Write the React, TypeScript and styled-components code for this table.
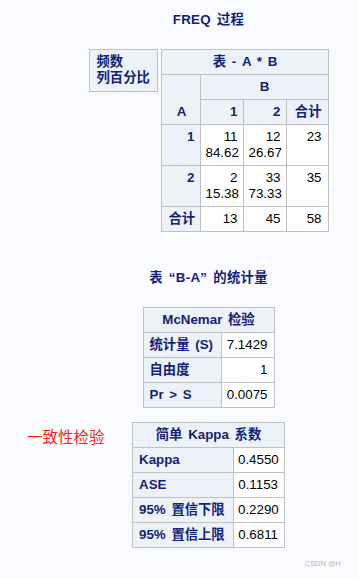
import React from 'react';
import styled, { createGlobalStyle } from 'styled-components';

const GlobalStyle = createGlobalStyle`
  html, body {
    margin: 0;
    padding: 0;
    background: #fafbfe;
  }
  body {
    font-family: 'Liberation Sans', 'Noto Sans CJK SC', sans-serif;
    overflow: hidden;
  }
`;

const Page = styled.div`
  width: 357px;
  height: 578px;
  display: flex;
  flex-direction: column;
  background: #fafbfe;
`;

// SAS output is centred on x = 208.5
const Centered = styled.div`
  width: 297px;
  margin-left: 60px;
  display: flex;
  flex-direction: column;
  align-items: center;
`;

const Title = styled.div<{ $top: number }>`
  margin-top: ${(p) => p.$top}px;
  font-size: 13.33px;
  line-height: 16px;
  font-weight: bold;
  color: #112277;
  letter-spacing: 0.3px;
  word-spacing: 2px;
  white-space: nowrap;
`;

// full-width CJK quotation marks, hugging the quoted text
const Quote = styled.span<{ $open?: boolean }>`
  display: inline-block;
  width: 13px;
  text-align: ${(p) => (p.$open ? 'right' : 'left')};
`;

const CrossRow = styled.div`
  margin-top: 21px;
  display: flex;
  align-items: flex-start;
  gap: 3px;
`;

const LegendBox = styled.div`
  box-sizing: border-box;
  width: 69px;
  margin-left: 1px;
  padding: 4px 6px 5px;
  border: 1px solid #c1c1c1;
  background: #edf2f9;
  color: #112277;
  font-size: 13.33px;
  line-height: 16px;
  font-weight: bold;
  white-space: nowrap;
`;

const Table = styled.table<{ $width: number; $top?: number }>`
  border-collapse: collapse;
  table-layout: fixed;
  width: ${(p) => p.$width}px;
  margin-top: ${(p) => p.$top ?? 0}px;
  font-size: 13.33px;
  line-height: 16px;
  flex-shrink: 0;
`;

const Head = styled.th<{ $align?: string; $valign?: string }>`
  padding: 4px 6px;
  border: 1px solid #c1c1c1;
  background: #edf2f9;
  color: #112277;
  font-weight: bold;
  word-spacing: 2px;
  text-align: ${(p) => p.$align ?? 'left'};
  vertical-align: ${(p) => p.$valign ?? 'top'};
  white-space: nowrap;
`;

const Cell = styled.td`
  padding: 4px 6px 4px 4px;
  border: 1px solid #c1c1c1;
  background: #ffffff;
  color: #000000;
  text-align: right;
  vertical-align: top;
  white-space: nowrap;
`;

const KappaRow = styled.div`
  margin-top: 14px;
  padding-left: 27px;
  display: flex;
  align-items: flex-start;
`;

const Note = styled.div`
  width: 105px;
  margin-top: 4px;
  font-family: 'Noto Sans CJK SC', sans-serif;
  font-size: 15.5px;
  line-height: 20px;
  color: #ff2020;
  white-space: nowrap;
`;

const Footer = styled.div`
  margin-top: auto;
  padding: 0 16px 10px 0;
  display: flex;
  justify-content: flex-end;
  font-size: 7.5px;
  color: #b8b8b8;
`;

const crossRows = [
  { label: '1', cells: [['11', '84.62'], ['12', '26.67'], ['23']] },
  { label: '2', cells: [['2', '15.38'], ['33', '73.33'], ['35']] },
  { label: '合计', cells: [['13'], ['45'], ['58']] },
];

const mcnemar = [
  ['统计量 (S)', '7.1429'],
  ['自由度', '1'],
  ['Pr > S', '0.0075'],
];

const kappa = [
  ['Kappa', '0.4550'],
  ['ASE', '0.1153'],
  ['95% 置信下限', '0.2290'],
  ['95% 置信上限', '0.6811'],
];

const StatTable: React.FC<{ title: string; rows: string[][]; widths: number[]; top?: number }> = ({
  title,
  rows,
  widths,
  top,
}) => (
  <Table $width={widths[0] + widths[1]} $top={top}>
    <colgroup>
      <col style={{ width: widths[0] }} />
      <col style={{ width: widths[1] }} />
    </colgroup>
    <thead>
      <tr>
        <Head colSpan={2} $align='center'>
          {title}
        </Head>
      </tr>
    </thead>
    <tbody>
      {rows.map(([k, v]) => (
        <tr key={k}>
          <Head>{k}</Head>
          <Cell>{v}</Cell>
        </tr>
      ))}
    </tbody>
  </Table>
);

export default function App() {
  return (
    <Page>
      <GlobalStyle />
      <Centered>
        <Title $top={12}>FREQ 过程</Title>
        <CrossRow>
          <LegendBox>
            频数
            <br />
            列百分比
          </LegendBox>
          <Table $width={166}>
            <colgroup>
              <col style={{ width: 39 }} />
              <col style={{ width: 43 }} />
              <col style={{ width: 43 }} />
              <col style={{ width: 41 }} />
            </colgroup>
            <thead>
              <tr>
                <Head colSpan={4} $align='center'>
                  表 - A * B
                </Head>
              </tr>
              <tr>
                <Head rowSpan={2} $align='center' $valign='bottom'>
                  A
                </Head>
                <Head colSpan={3} $align='center'>
                  B
                </Head>
              </tr>
              <tr>
                <Head $align='right'>1</Head>
                <Head $align='right'>2</Head>
                <Head $align='right'>合计</Head>
              </tr>
            </thead>
            <tbody>
              {crossRows.map((r) => (
                <tr key={r.label}>
                  <Head $align='right'>{r.label}</Head>
                  {r.cells.map((c, i) => (
                    <Cell key={i}>
                      {c[0]}
                      {c[1] && (
                        <>
                          <br />
                          {c[1]}
                        </>
                      )}
                    </Cell>
                  ))}
                </tr>
              ))}
            </tbody>
          </Table>
        </CrossRow>
        <Title $top={38}>
          表<Quote $open>“</Quote>B-A<Quote>”</Quote>的统计量
        </Title>
        <StatTable title='McNemar 检验' rows={mcnemar} widths={[78, 53]} top={21} />
      </Centered>
      <KappaRow>
        <Note>一致性检验</Note>
        <StatTable title='简单 Kappa 系数' rows={kappa} widths={[101, 51]} />
      </KappaRow>
      <Footer>CSDN @H</Footer>
    </Page>
  );
}
